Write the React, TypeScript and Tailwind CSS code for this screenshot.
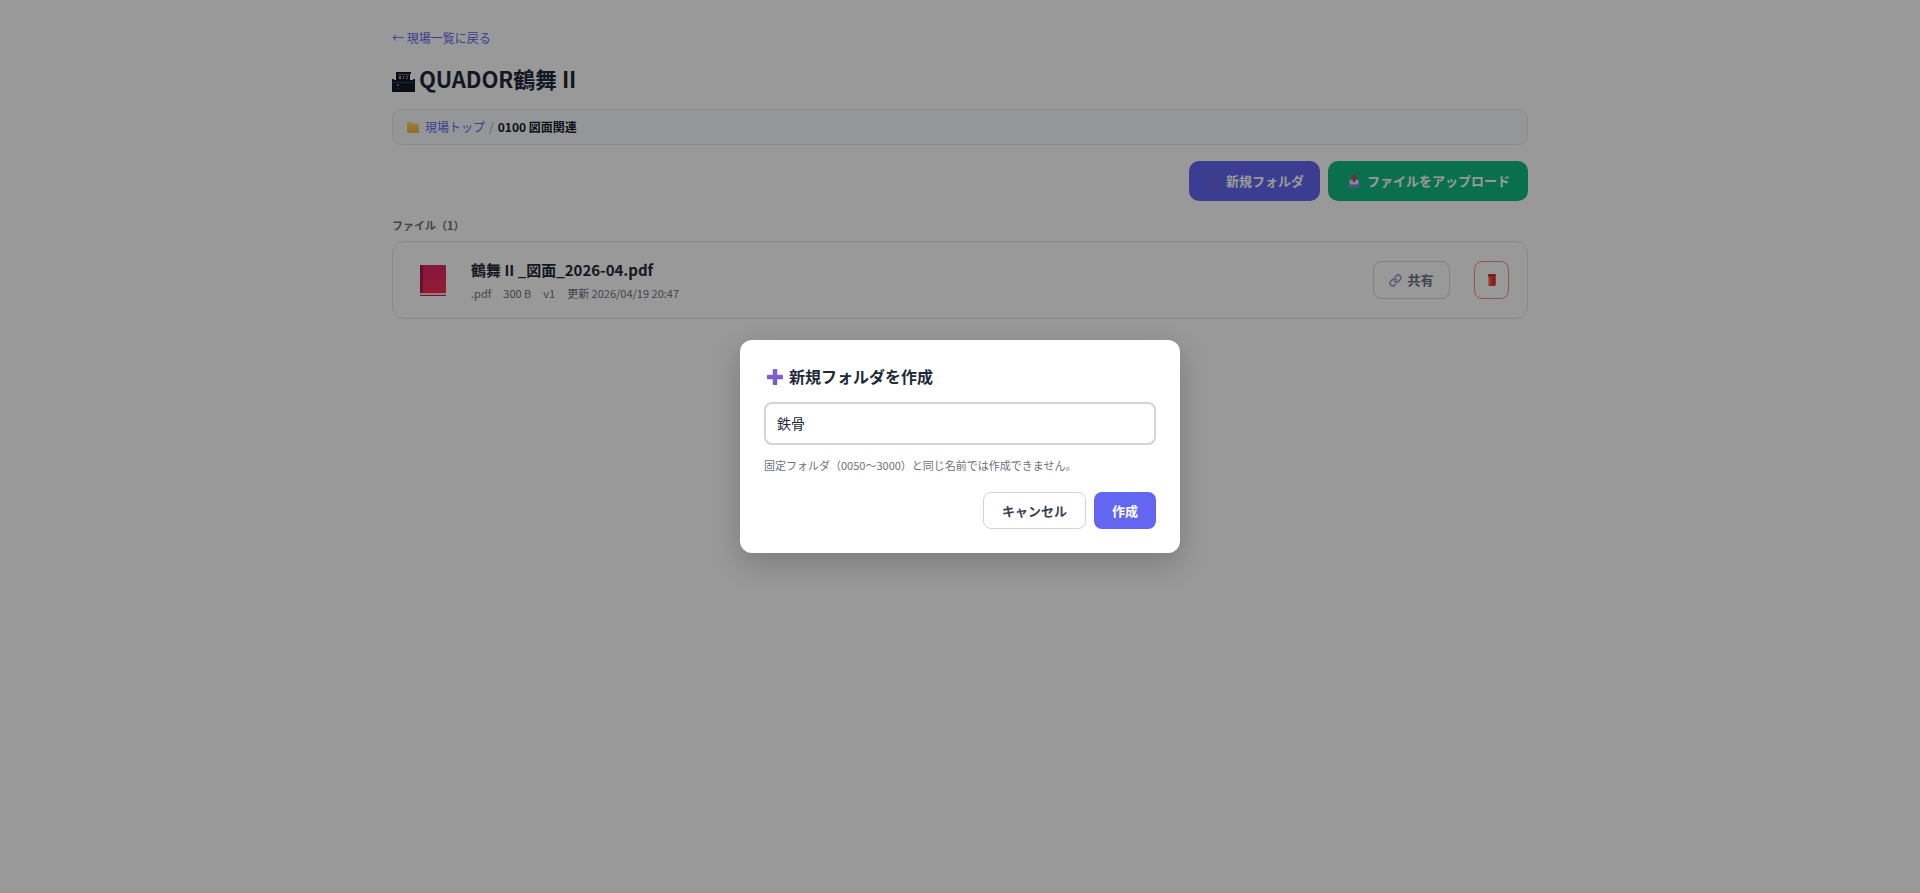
import React from 'react';
import { Link } from 'lucide-react';

const FONT = "font-['Noto_Sans_CJK_JP','Noto_Sans',sans-serif]";

const PlusIcon = ({ size, weight }: { size: number; weight: number }) => (
  <svg width={size} height={size} viewBox="0 0 16 16" className="shrink-0">
    <defs>
      <linearGradient id={`plus-${size}`} x1="0" y1="0" x2="0" y2="1">
        <stop offset="0" stopColor="#8b5fc9" />
        <stop offset="1" stopColor="#6a5fce" />
      </linearGradient>
    </defs>
    <rect x="0" y={8 - weight / 2} width="16" height={weight} rx="0.8" fill={`url(#plus-${size})`} />
    <rect x={8 - weight / 2} y="0" width={weight} height="16" rx="0.8" fill={`url(#plus-${size})`} />
  </svg>
);

const BuildingIcon = () => (
  <svg width="23" height="20" viewBox="0 0 23 20" className="mt-[8px] shrink-0">
    <path d="M4 0h15v2h-1v6h3v-1h2v13H0V7h2v1h2z" fill="#111827" />
    <rect x="6" y="2" width="11" height="1" fill="#6b7280" />
    <path d="M7 4h2v3H7zM11 4h1v3h-1zM14 4h2v1h-2zM14 6h2v1h-2z" fill="#9ca3af" />
    <rect x="1" y="10" width="21" height="1" fill="#374151" />
    <rect x="5" y="12" width="2" height="2" fill="#6b7280" />
    <rect x="5" y="16" width="2" height="1" fill="#4b5563" />
  </svg>
);

const FolderIcon = () => (
  <svg width="12" height="11" viewBox="0 0 12 11" className="mr-[6px] shrink-0">
    <defs>
      <linearGradient id="folder" x1="0" y1="0" x2="0" y2="1">
        <stop offset="0" stopColor="#fcd96a" />
        <stop offset="1" stopColor="#f7b53f" />
      </linearGradient>
    </defs>
    <path d="M0 1a1 1 0 0 1 1-1h3l1.5 1.5H11a1 1 0 0 1 1 1V10a1 1 0 0 1-1 1H1a1 1 0 0 1-1-1z" fill="url(#folder)" />
  </svg>
);

const UploadIcon = () => (
  <svg width="12" height="14" viewBox="0 0 12 14" className="shrink-0">
    <rect x="0" y="6" width="12" height="8" rx="1" fill="#5b7fd1" />
    <rect x="1.5" y="6" width="9" height="4.5" fill="#dbe4f5" />
    <rect x="0" y="11" width="12" height="3" rx="0.8" fill="#7c93c9" />
    <path d="M6 0l3.2 3.4H7.2V8H4.8V3.4H2.8z" fill="#e8344e" />
  </svg>
);

const BookIcon = () => (
  <svg width="26" height="31" viewBox="0 0 26 31" className="shrink-0">
    <defs>
      <linearGradient id="book" x1="0" y1="0" x2="0" y2="1">
        <stop offset="0" stopColor="#e0266e" />
        <stop offset="1" stopColor="#f5304f" />
      </linearGradient>
    </defs>
    <path d="M1 0h24a1 1 0 0 1 1 1v27H0V1a1 1 0 0 1 1-1z" fill="url(#book)" />
    <rect x="0" y="0" width="3" height="29" fill="#a81a48" />
    <rect x="0" y="28" width="26" height="2" fill="#f3d5e0" />
    <rect x="0" y="30" width="26" height="1" fill="#c81e55" />
  </svg>
);

const TrashIcon = () => (
  <svg width="8" height="12" viewBox="0 0 8 12" className="shrink-0">
    <rect x="0.5" y="1" width="7" height="11" rx="1" fill="#ef3b3b" />
    <rect x="0" y="0" width="8" height="2.5" rx="1.2" fill="#dc2626" />
    <rect x="1" y="3.5" width="1.5" height="7.5" fill="#f87171" />
    <rect x="6" y="3" width="1.5" height="8" fill="#c2410c" />
  </svg>
);

export default function App() {
  return (
    <div className={`${FONT} relative min-h-[893px] bg-white text-[#1f2937]`}>
      <div className="mx-auto w-[1200px] px-8 pt-[28px]">
        <a className="block text-[12px] leading-[20px] text-[#6366f1]">← 現場一覧に戻る</a>

        <h1 className="mt-[12px] flex items-center gap-[4px] text-[22px] font-bold leading-[36px] tracking-[-0.1px]">
          <BuildingIcon />
          <span>QUADOR鶴舞 II</span>
        </h1>

        <div className="mt-[13px] flex h-[36px] items-center rounded-[10px] border border-[#e5e7eb] bg-[#f8fafc] px-[14px] text-[12px]">
          <FolderIcon />
          <a className="text-[#6366f1]">現場トップ</a>
          <span className="mx-[4px] text-[#9ca3af]">/</span>
          <span className="font-semibold text-[#111827]">0100 図面関連</span>
        </div>

        <div className="mt-[16px] flex justify-end gap-2">
          <button className="flex h-[40px] items-center gap-[6px] rounded-[10px] bg-[#6366f1] pl-[18px] pr-[16px] text-[13px] font-bold text-white">
            <PlusIcon size={13} weight={2} />
            新規フォルダ
          </button>
          <button className="flex h-[40px] items-center gap-[5px] rounded-[10px] bg-[#10b981] px-[18px] text-[13px] font-bold text-white">
            <span className="flex w-[16px] justify-center"><UploadIcon /></span>
            ファイルをアップロード
          </button>
        </div>

        <div className="mt-[16px] text-[11px] font-bold leading-[16px] text-[#6b7280]">ファイル（1）</div>

        <div className="mt-[8px] flex h-[78px] items-center rounded-[12px] border border-[#e5e7eb] bg-white pl-[27px] pr-[18px]">
          <BookIcon />
          <div className="ml-[25px] flex-1">
            <div className="text-[15px] font-semibold leading-[22px]">鶴舞 II _図面_2026-04.pdf</div>
            <div className="mt-[4px] flex gap-3 text-[11px] leading-[16px] text-[#6b7280]">
              <span>.pdf</span>
              <span>300 B</span>
              <span>v1</span>
              <span>更新 2026/04/19 20:47</span>
            </div>
          </div>
          <button className="flex h-[38px] w-[77px] items-center justify-center gap-[5px] rounded-[8px] border border-[#d1d5db] text-[13px] font-semibold text-[#6b7280]">
            <Link size={13} strokeWidth={3} className="text-[#a79cc9]" />
            共有
          </button>
          <button className="ml-[24px] flex h-[38px] w-[35px] items-center justify-center rounded-[8px] border border-[#f98b8b]">
            <TrashIcon />
          </button>
        </div>
      </div>

      <div className="absolute inset-0 flex items-center justify-center bg-black/40">
        <div className="w-[440px] rounded-[12px] bg-white p-6 shadow-[0_10px_30px_rgba(0,0,0,0.2)]">
          <div className="flex items-center gap-[6px] pb-[3px] pl-[3px] text-[16px] font-bold leading-[25px] text-[#1f2937]">
            <PlusIcon size={16} weight={4.5} />
            新規フォルダを作成
          </div>
          <input
            readOnly
            value="鉄骨"
            className="mt-[10px] block h-[43px] w-full rounded-[8px] border-2 border-[#d1d5db] px-[11px] pb-[2px] text-[14px] text-[#1f2937] outline-none"
          />
          <p className="mt-[12px] text-[11px] leading-[16px] text-[#6b7280]">固定フォルダ（0050〜3000）と同じ名前では作成できません。</p>
          <div className="mt-[19px] flex justify-end gap-2">
            <button className="h-[37px] w-[103px] rounded-[8px] border border-[#d1d5db] bg-white text-[13px] font-bold text-[#374151]">キャンセル</button>
            <button className="h-[37px] w-[62px] rounded-[8px] bg-[#6366f1] text-[13px] font-bold text-white">作成</button>
          </div>
        </div>
      </div>
    </div>
  );
}
